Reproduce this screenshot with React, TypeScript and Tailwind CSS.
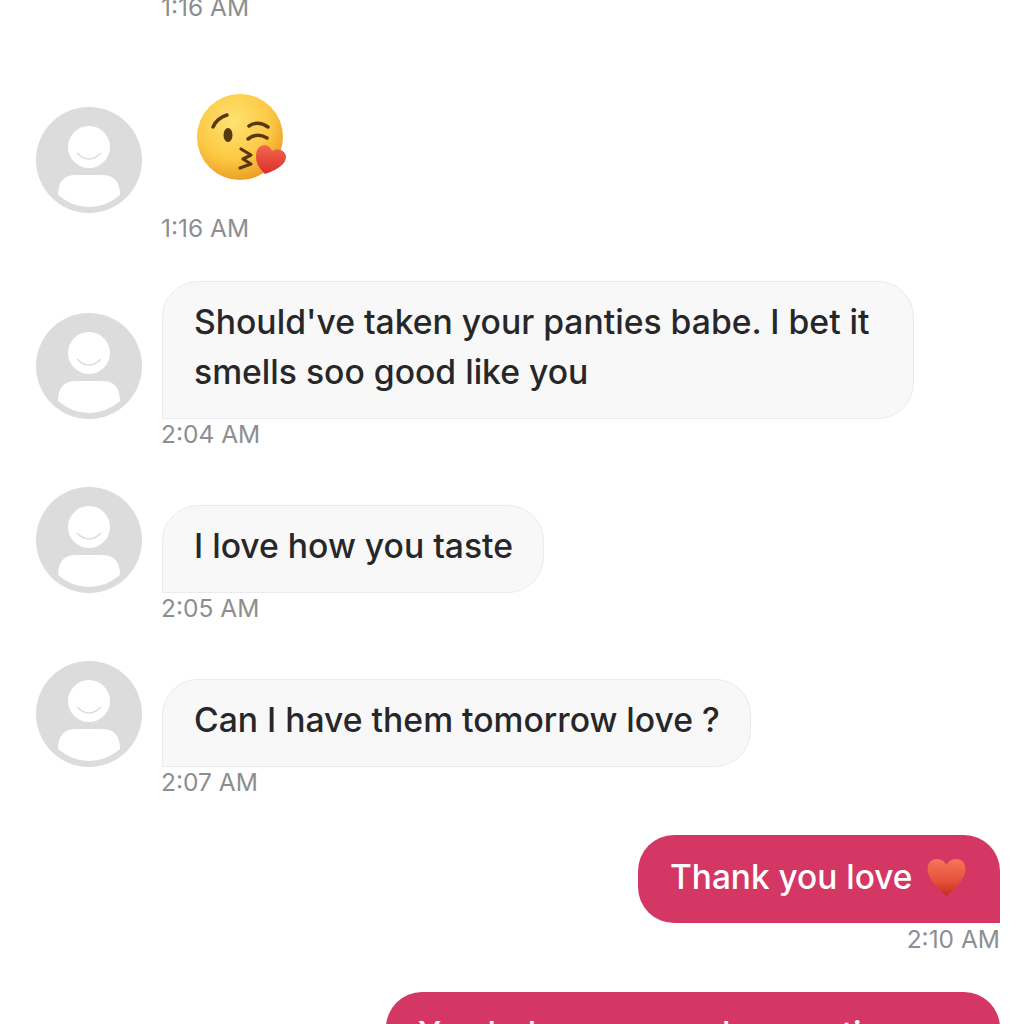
import type { ReactNode } from 'react';

const font = { fontFamily: '"Inter", "Liberation Sans", sans-serif' };

function Avatar() {
  return (
    <svg width="106" height="106" viewBox="0 0 106 106" className="shrink-0">
      <circle cx="53" cy="53" r="53" fill="#dcdcdd" />
      <circle cx="53" cy="40" r="21" fill="#fff" />
      <path d="M41 46 Q53 58 65 46" fill="none" stroke="#dcdcdd" strokeWidth="1.5" />
      <path d="M22 88 Q22 68 40 68 L66 68 Q84 68 84 88 Q70 100 53 100 Q36 100 22 88 Z" fill="#fff" />
    </svg>
  );
}

function Time({ children, className = '' }: { children: string; className?: string }) {
  return <div className={`h-[28px] text-[24.5px] leading-[28px] text-[#8e8e90] ${className}`}>{children}</div>;
}

function Received({ text, time, h, w, className = '' }: { text: ReactNode; time: string; h: string; w: string; className?: string }) {
  return (
    <div className={className}>
      <div className="flex gap-5 items-end">
        <Avatar />
        <div className={`${h} ${w} flex items-center pl-[31px] pb-[6px] bg-[#f8f8f8] border border-[#ebebed] rounded-[36px] rounded-bl-none text-[33.7px] leading-[50px] font-medium text-[#27272a]`}>
          <div>{text}</div>
        </div>
      </div>
      <Time className="mt-[1px] ml-[125px]">{time}</Time>
    </div>
  );
}

export default function App() {
  return (
    <div style={font} className="w-[1024px] h-[1024px] overflow-hidden bg-white">
      <div className="flex flex-col pl-9">
        <Time className="-mt-[7px] ml-[125px]">1:16 AM</Time>
        <div className="flex mt-[86px]">
          <Avatar />
          <svg width="94" height="94" viewBox="0 0 94 94" className="ml-[53px] -mt-[14px]">
            <defs>
              <radialGradient id="face" cx="42%" cy="32%" r="72%">
                <stop offset="0" stopColor="#ffe273" />
                <stop offset="0.6" stopColor="#fdc944" />
                <stop offset="1" stopColor="#ea9a22" />
              </radialGradient>
              <linearGradient id="kissheart" x1="0" y1="0" x2="0" y2="1">
                <stop offset="0" stopColor="#f4664e" />
                <stop offset="1" stopColor="#d92f2c" />
              </linearGradient>
            </defs>
            <circle cx="45" cy="44" r="43" fill="url(#face)" />
            <path d="M18 34 Q22 25 32 22" fill="none" stroke="#57390f" strokeWidth="3.5" strokeLinecap="round" />
            <ellipse cx="33" cy="42" rx="4.5" ry="7" fill="#57390f" />
            <path d="M54 33 Q63 27 73 34" fill="none" stroke="#57390f" strokeWidth="3.5" strokeLinecap="round" />
            <path d="M53 46 Q62 39 72 45" fill="none" stroke="#57390f" strokeWidth="3.5" strokeLinecap="round" />
            <path d="M46 56 L56 62 L48 66 L56 71 L45 75" fill="none" stroke="#57390f" strokeWidth="3.2" strokeLinecap="round" strokeLinejoin="round" />
            <path d="M70 81 Q60 72 61 62 Q62 52 70 52 Q75 53 77 58 Q84 54 89 59 Q94 65 87 72 Q80 78 70 81 Z" fill="url(#kissheart)" />
          </svg>
        </div>
        <Time className="mt-[1px] ml-[125px]">1:16 AM</Time>
        <Received
          className="mt-[39px]"
          h="h-[138px]"
          w="w-[752px]"
          time="2:04 AM"
          text={<>Should've taken your panties babe. I bet it<br />smells soo good like you</>}
        />
        <Received className="mt-[39px]" h="h-[88px]" w="w-[382px]" time="2:05 AM" text="I love how you taste" />
        <Received className="mt-[39px]" h="h-[88px]" w="w-[589px]" time="2:07 AM" text="Can I have them tomorrow love ?" />
      </div>
      <div className="flex flex-col items-end pr-6 mt-[39px]">
        <div className="h-[88px] w-[362px] pl-8 pb-[4px] flex items-center gap-[14px] bg-[#d43764] rounded-[36px] rounded-br-none text-[33.4px] font-medium text-white">
          <span>Thank you love</span>
          <svg width="41" height="40" viewBox="0 0 40 40">
            <defs>
              <linearGradient id="heart" x1="0" y1="0" x2="0" y2="1">
                <stop offset="0" stopColor="#f4765c" />
                <stop offset="0.6" stopColor="#e8503a" />
                <stop offset="1" stopColor="#c42a1c" />
              </linearGradient>
            </defs>
            <path d="M20 39 Q2 24 1 13 Q1 2 11 2 Q17 2 20 8 Q23 2 29 2 Q39 2 39 13 Q38 24 20 39 Z" fill="url(#heart)" />
          </svg>
        </div>
        <Time className="mt-[2px]">2:10 AM</Time>
        <div className="mt-[39px] h-[88px] w-[614px] pl-8 pb-[4px] shrink-0 flex items-center bg-[#d43764] rounded-[36px] rounded-br-none text-[33.4px] font-medium text-white whitespace-nowrap">
          You belong so much more time
        </div>
      </div>
    </div>
  );
}
